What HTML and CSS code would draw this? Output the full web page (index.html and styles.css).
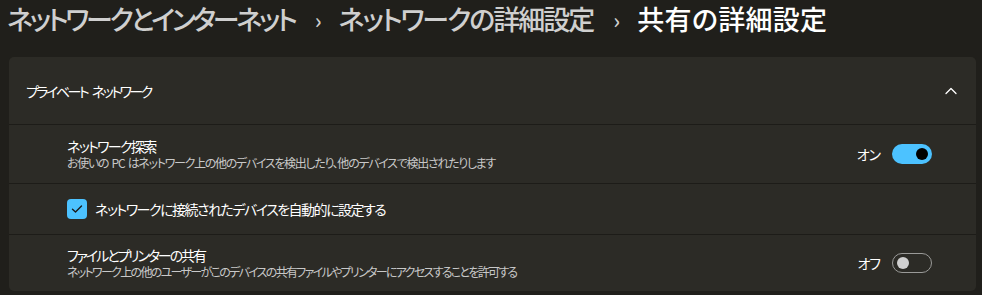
FILE: index.html
```html
<!DOCTYPE html>
<html lang="ja">
<head>
<meta charset="utf-8">
<link rel="stylesheet" href="styles.css">
</head>
<body>
<header class="crumbs">
  <span class="crumb c1">ネットワークとインターネット</span>
  <span class="sep">›</span>
  <span class="crumb c2">ネットワークの詳細設定</span>
  <span class="sep">›</span>
  <span class="crumb c3 current">共有の詳細設定</span>
</header>
<section class="card">
  <div class="card-head">
    <span class="head-title">プライベート ネットワーク</span>
    <svg class="chevron" width="12" height="8" viewBox="0 0 12 8"><path d="M1 6.5 L6 1.5 L11 6.5" fill="none" stroke="#ffffff" stroke-width="1.3" stroke-linecap="round" stroke-linejoin="round"/></svg>
  </div>
  <div class="row row-setting">
    <div class="texts">
      <div class="title t1">ネットワーク探索</div>
      <div class="desc d1">お使いの PC はネットワーク上の他のデバイスを検出したり、他のデバイスで検出されたりします</div>
    </div>
    <div class="control">
      <span class="state">オン</span>
      <span class="toggle on"><span class="knob"></span></span>
    </div>
  </div>
  <div class="row row-check">
    <span class="checkbox"><svg width="12" height="10" viewBox="0 0 12 10"><path d="M1.5 5.2 L4.5 8 L10.5 2" fill="none" stroke="#1a1a1a" stroke-width="1.4" stroke-linecap="round" stroke-linejoin="round"/></svg></span>
    <span class="check-label">ネットワークに接続されたデバイスを自動的に設定する</span>
  </div>
  <div class="row row-setting last">
    <div class="texts">
      <div class="title t3">ファイルとプリンターの共有</div>
      <div class="desc d3">ネットワーク上の他のユーザーがこのデバイスの共有ファイルやプリンターにアクセスすることを許可する</div>
    </div>
    <div class="control">
      <span class="state">オフ</span>
      <span class="toggle off"><span class="knob"></span></span>
    </div>
  </div>
</section>
</body>
</html>
```
FILE: styles.css
```css
html, body {
  margin: 0;
  padding: 0;
  background: #201f1b;
}
body {
  width: 982px;
  height: 295px;
  overflow: hidden;
  font-family: "Noto Sans CJK JP", "Noto Sans", sans-serif;
  font-feature-settings: "palt";
  color: #ffffff;
}
.crumbs {
  display: flex;
  align-items: center;
  height: 38px;
  padding: 0 0 0 7px;
  font-size: 27px;
  font-weight: 500;
  line-height: 38px;
}
.crumb {
  color: #cfcfcf;
}
.c1 {
  letter-spacing: -3.2px;
}
.c2 {
  letter-spacing: -2px;
}
.c3 {
  letter-spacing: 0.3px;
}
.crumb.current {
  color: #ffffff;
}
.sep {
  color: #cfcfcf;
  font-size: 22px;
  margin: 0 17px 0 20px;
}
.card {
  margin: 19px 6px 0 9px;
  background: #2c2b26;
  border-radius: 5px;
  overflow: hidden;
}
.card-head {
  height: 67px;
  display: flex;
  align-items: center;
  justify-content: space-between;
  padding: 0 19px 0 17px;
  border-bottom: 1px solid #1d1c18;
}
.head-title {
  font-size: 14px;
  letter-spacing: -2.5px;
  word-spacing: 4px;
}
.chevron {
  display: block;
}
.row {
  display: flex;
  align-items: center;
  padding: 0 44px 0 58px;
  border-bottom: 1px solid #1d1c18;
}
.row.last {
  border-bottom: none;
}
.row-setting {
  height: 58px;
  justify-content: space-between;
}
.row-setting.last {
  height: 56px;
}
.row-check {
  height: 50px;
}
.texts {
  display: flex;
  flex-direction: column;
}
.title {
  font-size: 14px;
  line-height: 18px;
}
.t1 {
  letter-spacing: -1.7px;
}
.t3 {
  letter-spacing: -2.1px;
}
.desc {
  font-size: 12px;
  line-height: 16px;
  color: #c8c8c8;
}
.d1 {
  letter-spacing: -1.3px;
  word-spacing: 2px;
}
.d3 {
  letter-spacing: -1.7px;
}
.control {
  display: flex;
  align-items: center;
  gap: 12px;
}
.state {
  font-size: 14px;
  letter-spacing: -1px;
}
.toggle {
  width: 40px;
  height: 20px;
  box-sizing: border-box;
  border-radius: 10px;
  display: flex;
  align-items: center;
}
.toggle.on {
  background: #4cc2ff;
  justify-content: flex-end;
  padding-right: 4px;
}
.toggle.on .knob {
  width: 12px;
  height: 12px;
  border-radius: 50%;
  background: #000000;
}
.toggle.off {
  border: 1px solid #9a9a98;
  padding-left: 4px;
}
.toggle.off .knob {
  width: 12px;
  height: 12px;
  border-radius: 50%;
  background: #d0d0d0;
}
.checkbox {
  width: 20px;
  height: 20px;
  border-radius: 4px;
  background: #4cc2ff;
  display: flex;
  align-items: center;
  justify-content: center;
  margin-right: 8px;
}
.checkbox svg {
  display: block;
}
.check-label {
  font-size: 14px;
  letter-spacing: -1.5px;
}
```
